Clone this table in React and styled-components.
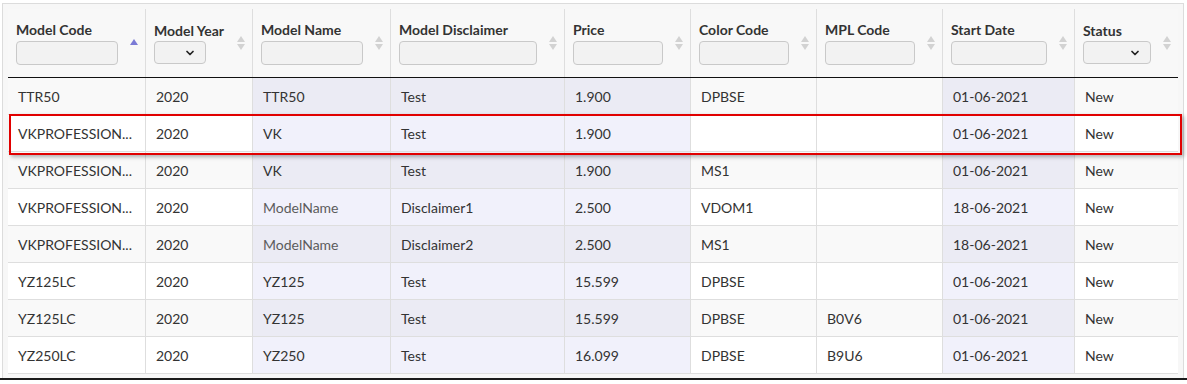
import React from 'react';
import styled, { createGlobalStyle } from 'styled-components';
import { ChevronDown } from 'lucide-react';

const GlobalStyle = createGlobalStyle`
  html, body {
    margin: 0;
    padding: 0;
    background: #fff;
  }
  body {
    font-family: Lato, "Liberation Sans", sans-serif;
    color: #333;
  }
`;

const columns = [
  { key: 'code', title: 'Model Code', width: 138, filter: 'text', sort: 'asc' },
  { key: 'year', title: 'Model Year', width: 107, filter: 'select', selectWidth: 52 },
  { key: 'name', title: 'Model Name', width: 138, filter: 'text', highlight: true },
  { key: 'disclaimer', title: 'Model Disclaimer', width: 174, filter: 'text', highlight: true },
  { key: 'price', title: 'Price', width: 126, filter: 'text', highlight: true },
  { key: 'color', title: 'Color Code', width: 126, filter: 'text' },
  { key: 'mpl', title: 'MPL Code', width: 126, filter: 'text' },
  { key: 'start', title: 'Start Date', width: 132, filter: 'text', highlight: true },
  { key: 'status', title: 'Status', width: 103, filter: 'select', selectWidth: 68 },
];

const VK = 'VKPROFESSION...';

const rows = [
  { code: 'TTR50', year: '2020', name: 'TTR50', disclaimer: 'Test', price: '1.900', color: 'DPBSE', mpl: '', start: '01-06-2021', status: 'New' },
  { code: VK, year: '2020', name: 'VK', disclaimer: 'Test', price: '1.900', color: '', mpl: '', start: '01-06-2021', status: 'New', selected: true },
  { code: VK, year: '2020', name: 'VK', disclaimer: 'Test', price: '1.900', color: 'MS1', mpl: '', start: '01-06-2021', status: 'New' },
  { code: VK, year: '2020', name: 'ModelName', disclaimer: 'Disclaimer1', price: '2.500', color: 'VDOM1', mpl: '', start: '18-06-2021', status: 'New', muted: 'name' },
  { code: VK, year: '2020', name: 'ModelName', disclaimer: 'Disclaimer2', price: '2.500', color: 'MS1', mpl: '', start: '18-06-2021', status: 'New', muted: 'name' },
  { code: 'YZ125LC', year: '2020', name: 'YZ125', disclaimer: 'Test', price: '15.599', color: 'DPBSE', mpl: '', start: '01-06-2021', status: 'New' },
  { code: 'YZ125LC', year: '2020', name: 'YZ125', disclaimer: 'Test', price: '15.599', color: 'DPBSE', mpl: 'B0V6', start: '01-06-2021', status: 'New' },
  { code: 'YZ250LC', year: '2020', name: 'YZ250', disclaimer: 'Test', price: '16.099', color: 'DPBSE', mpl: 'B9U6', start: '01-06-2021', status: 'New' },
];

const gridTemplate = columns.map(c => `${c.width}px`).join(' ');

const Page = styled.div`
  padding: 3px 3px 0 2px;
  border-bottom: 2px solid #1b1b1b;
`;

const Frame = styled.div`
  border: 1px solid #dcdcdc;
  border-bottom: none;
  background: #f7f7f7;
  padding: 5px 5px 4px 5px;
`;

const HeadRow = styled.div`
  display: grid;
  grid-template-columns: ${gridTemplate};
  border-bottom: 1px solid #111;
  background: #f8f8f8;
`;

const HeadCell = styled.div`
  display: flex;
  align-items: center;
  gap: 12px;
  height: 68px;
  padding: 0 7px 0 8px;
  box-sizing: border-box;
  border-right: ${p => (p.$last ? 'none' : '1px solid #dedede')};
`;

const HeadContent = styled.div`
  flex: 1;
  min-width: 0;
  display: flex;
  flex-direction: column;
  gap: ${p => (p.$select ? '2px' : '3px')};
`;

const Title = styled.div`
  font-size: 14px;
  font-weight: 700;
  line-height: 16px;
  color: #333;
  white-space: nowrap;
`;

const FilterInput = styled.input`
  box-sizing: border-box;
  width: 100%;
  height: 24px;
  border: 1px solid #c9c9c9;
  border-radius: 4px;
  background: #f2f2f2;
  outline: none;
  padding: 0 6px;
`;

const SelectWrap = styled.div`
  position: relative;
  width: ${p => p.$width}px;
  height: 23px;
`;

const FilterSelect = styled.select`
  appearance: none;
  box-sizing: border-box;
  width: 100%;
  height: 100%;
  border: 1px solid #c9c9c9;
  border-radius: 4px;
  background: #f2f2f2;
  outline: none;
`;

const Chevron = styled(ChevronDown)`
  position: absolute;
  right: 10px;
  top: 6px;
  pointer-events: none;
  color: #222;
`;

const SortIcon = styled.svg`
  flex: none;
  width: 8px;
  height: 14px;
`;

const BodyRow = styled.div`
  display: grid;
  grid-template-columns: ${gridTemplate};
  position: relative;
  background: ${p => (p.$odd ? '#f9f9f9' : '#fff')};

  &::after {
    content: '';
    display: ${p => (p.$selected ? 'block' : 'none')};
    position: absolute;
    z-index: 2;
    left: 1px;
    right: -4px;
    top: -1px;
    bottom: -3px;
    border: 2px solid #e10000;
    box-shadow: 2px 2px 4px rgba(0, 0, 0, 0.3);
    pointer-events: none;
  }
`;

const Cell = styled.div`
  box-sizing: border-box;
  height: 37px;
  display: flex;
  align-items: center;
  padding: 0 10px;
  font-size: 14px;
  white-space: nowrap;
  color: ${p => (p.$muted ? '#5c5c5c' : '#333')};
  border-right: ${p => (p.$last ? 'none' : '1px solid #dedede')};
  border-bottom: 1px solid #dedede;
  background: ${p => (p.$highlight ? (p.$odd ? '#ebebf4' : '#f1f1fb') : 'transparent')};
`;

const SortArrows = ({ sort }) =>
  sort === 'asc' ? (
    <SortIcon viewBox="0 0 8 14">
      <path d="M0 9 L4 3 L8 9 Z" fill="#7b7bd6" />
    </SortIcon>
  ) : (
    <SortIcon viewBox="0 0 8 14">
      <path d="M0 6 L4 0 L8 6 Z" fill="#d2d2d2" />
      <path d="M0 8 L4 14 L8 8 Z" fill="#d2d2d2" />
    </SortIcon>
  );

const App = () => (
  <>
    <GlobalStyle />
    <Page>
      <Frame>
        <HeadRow>
          {columns.map((col, i) => (
            <HeadCell key={col.key} $last={i === columns.length - 1}>
              <HeadContent $select={col.filter === 'select'}>
                <Title>{col.title}</Title>
                {col.filter === 'select' ? (
                  <SelectWrap $width={col.selectWidth}>
                    <FilterSelect defaultValue="">
                      <option value="" />
                    </FilterSelect>
                    <Chevron size={12} strokeWidth={3.5} />
                  </SelectWrap>
                ) : (
                  <FilterInput type="text" />
                )}
              </HeadContent>
              <SortArrows sort={col.sort} />
            </HeadCell>
          ))}
        </HeadRow>
        {rows.map((row, r) => {
          const odd = r % 2 === 0;
          return (
            <BodyRow key={r} $odd={odd} $selected={row.selected}>
              {columns.map((col, i) => (
                <Cell
                  key={col.key}
                  $odd={odd}
                  $highlight={col.highlight}
                  $muted={row.muted === col.key}
                  $last={i === columns.length - 1}
                >
                  {row[col.key]}
                </Cell>
              ))}
            </BodyRow>
          );
        })}
      </Frame>
    </Page>
  </>
);

export default App;
